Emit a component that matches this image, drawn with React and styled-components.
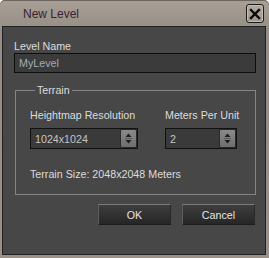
import styled, { createGlobalStyle } from 'styled-components'

const Global = createGlobalStyle`
  html, body {
    margin: 0;
    padding: 0;
    background: #ffffff;
  }
  body {
    font-family: "Liberation Sans", Arial, sans-serif;
    font-size: 10.7px;
  }
`

const App = () => {
    return (
        <>
            <Global />
            <Window>
                <TitleBar>
                    <Title>New Level</Title>
                    <CloseButton aria-label="Close">
                        <svg width="12" height="12" viewBox="0 0 12 12">
                            <path d="M2 2 L10 10 M10 2 L2 10" stroke="#0a0a0a" strokeWidth="2.4" strokeLinecap="square" />
                        </svg>
                    </CloseButton>
                </TitleBar>
                <Body>
                    <Label>Level Name</Label>
                    <TextInput defaultValue="MyLevel" />
                    <Group>
                        <Legend>Terrain</Legend>
                        <FieldRow>
                            <Field width={108}>
                                <Label>Heightmap Resolution</Label>
                                <Spinner>
                                    <SpinValue>1024x1024</SpinValue>
                                    <SpinArrows />
                                </Spinner>
                            </Field>
                            <Field width={72}>
                                <Label>Meters Per Unit</Label>
                                <Spinner>
                                    <SpinValue>2</SpinValue>
                                    <SpinArrows />
                                </Spinner>
                            </Field>
                        </FieldRow>
                        <Info>Terrain Size: 2048x2048 Meters</Info>
                    </Group>
                    <ButtonRow>
                        <Button>OK</Button>
                        <Button>Cancel</Button>
                    </ButtonRow>
                </Body>
            </Window>
        </>
    )
}

const SpinArrows = () => (
    <SpinButton>
        <svg width="7" height="11" viewBox="0 0 7 11">
            <path d="M3.5 0.5 L6.5 4 L0.5 4 Z" fill="#1e1e1e" />
            <path d="M0.5 7 L6.5 7 L3.5 10.5 Z" fill="#1e1e1e" />
            <rect x="0" y="5" width="7" height="1" fill="#5a5a5a" />
        </svg>
    </SpinButton>
)

export default App

const Window = styled.div`
  width: 269px;
  height: 258px;
  box-sizing: border-box;
  display: flex;
  flex-direction: column;
  background: linear-gradient(#a8a096, #968e84 30px, #9a9288);
  border-radius: 5px 5px 0 0;
  box-shadow: inset 0 1px 0 #6c655e;
  padding: 0 3px 3px 2px;
`

const TitleBar = styled.div`
  height: 26px;
  display: flex;
  align-items: center;
  justify-content: space-between;
  padding: 0 2px 0 21px;
`

const Title = styled.span`
  font-family: "Liberation Sans", Arial, sans-serif;
  font-size: 12px;
  color: #3a1f32;
  padding-top: 1px;
`

const CloseButton = styled.div`
  width: 18px;
  height: 19px;
  box-sizing: border-box;
  border: 1px solid #1c1c1c;
  border-radius: 3px;
  background: linear-gradient(#b2aaa0, #a09890);
  box-shadow: inset 0 0 0 1px #c4bcb2;
  display: flex;
  align-items: center;
  justify-content: center;
  margin-top: 1px;
`

const Body = styled.div`
  flex: 1;
  display: flex;
  flex-direction: column;
  background: #474747;
  border: 1px solid #202020;
  padding: 13px 9px 0 11px;
`

const Label = styled.div`
  color: #dcdcdc;
  line-height: 13px;
  white-space: nowrap;
`

const TextInput = styled.input`
  height: 20px;
  box-sizing: border-box;
  border: 1px solid #0e0e0e;
  background: #3b3b3b;
  color: #a4acb4;
  font-family: "Liberation Sans", Arial, sans-serif;
  font-size: 10.7px;
  padding: 0 4px;
  outline: none;
  margin: 0;
`

const Group = styled.fieldset`
  margin: 11px 0 0 1px;
  border: 1px solid #858585;
  padding: 12px 14px 13px 14px;
  min-width: 0;
`

const Legend = styled.legend`
  color: #dcdcdc;
  padding: 0 2px;
  margin-left: 5px;
  line-height: 13px;
`

const FieldRow = styled.div`
  display: flex;
  gap: 27px;
`

const Field = styled.div`
  width: ${p => p.width}px;
  display: flex;
  flex-direction: column;
  gap: 6px;
`

const Spinner = styled.div`
  height: 21px;
  box-sizing: border-box;
  border: 1px solid #111111;
  background: #3a3a3a;
  display: flex;
  align-items: stretch;
  justify-content: space-between;
`

const SpinValue = styled.span`
  color: #c4c4c4;
  padding-left: 4px;
  display: flex;
  align-items: center;
`

const SpinButton = styled.div`
  width: 17px;
  box-sizing: border-box;
  border: 1px solid #2a2a2a;
  border-radius: 2px;
  background: linear-gradient(#8a8a8a, #6e6e6e);
  display: flex;
  align-items: center;
  justify-content: center;
`

const Info = styled.div`
  color: #dcdcdc;
  line-height: 13px;
  margin-top: 19px;
`

const ButtonRow = styled.div`
  display: flex;
  justify-content: flex-end;
  gap: 11px;
  margin-top: 9px;
  padding-right: 1px;
`

const Button = styled.button`
  width: 73px;
  height: 21px;
  box-sizing: border-box;
  border: 1px solid #5c5c5c;
  border-top-color: #7a7a7a;
  border-bottom-color: #1c1c1c;
  border-right-color: #2a2a2a;
  background: linear-gradient(#3e3e3e, #262626);
  color: #e4e4e4;
  font-family: "Liberation Sans", Arial, sans-serif;
  font-size: 10.7px;
  padding: 0;
`
